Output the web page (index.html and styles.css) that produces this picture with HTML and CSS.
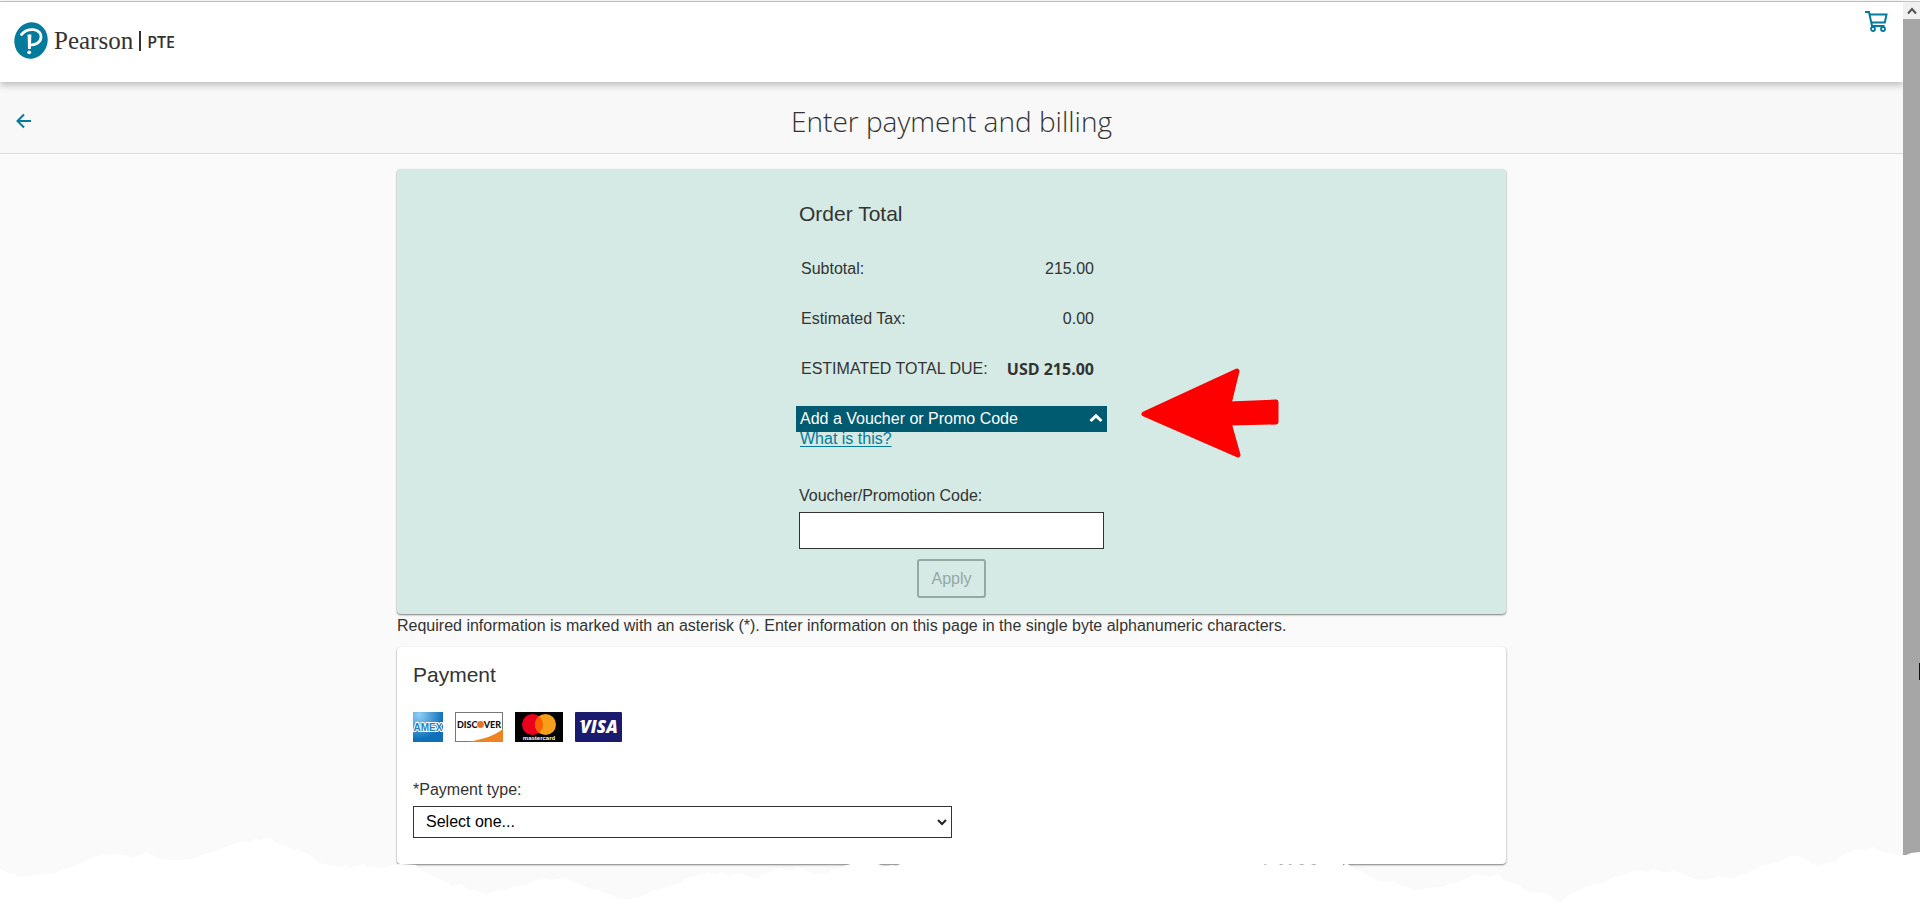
FILE: index.html
```html
<!DOCTYPE html>
<html lang="en">
<head>
  <meta charset="UTF-8">
  <meta name="viewport" content="width=device-width, initial-scale=1.0">
  <title>Enter payment and billing</title>
  <link rel="stylesheet" href="styles.css">
</head>
<body>
  <div class="window">
    <div class="page">
      <!-- Header -->
      <header class="header">
        <a class="logo" href="#">
          <svg class="logo-mark" viewBox="0 0 34 37" aria-hidden="true">
            <ellipse cx="17" cy="18.500" rx="16.600" ry="18.300" transform="rotate(14 17 18.500)" fill="#047a9c"/>
            <path d="M7.500 12.500C10.500 9 15 7.300 19.500 7.700C24.500 8.200 27.500 11.200 27 15.500C26.500 20.500 21.500 23.200 16.800 22.800" fill="none" stroke="#fff" stroke-width="2.800" stroke-linecap="round"/>
            <path d="M13.600 12.500H17.400L16.800 27H14Z" fill="#fff"/>
            <circle cx="15.200" cy="30.300" r="1.900" fill="#fff"/>
          </svg>
          <span class="logo-name">Pearson</span>
          <span class="logo-product">PTE</span>
        </a>
        <a class="cart" href="#" aria-label="Shopping cart">
          <svg viewBox="0 0 24 24" aria-hidden="true">
            <path d="M1 3H5L8 17H20.500M6 5.500H22.500L20.800 13.500H7.500" fill="none" stroke="#047a9c" stroke-width="2"/>
            <circle cx="9" cy="20" r="2" fill="#fff" stroke="#047a9c" stroke-width="1.800"/>
            <circle cx="19" cy="20" r="2" fill="#fff" stroke="#047a9c" stroke-width="1.800"/>
          </svg>
        </a>
      </header>

      <!-- Title bar -->
      <div class="title-bar">
        <a class="back" href="#" aria-label="Back">
          <svg viewBox="0 0 16 16" aria-hidden="true">
            <path d="M15 8H2M8 1.500L1.500 8L8 14.500" fill="none" stroke="#047a9c" stroke-width="2"/>
          </svg>
        </a>
        <h1>Enter payment and billing</h1>
      </div>

      <main class="content">
        <!-- Order total -->
        <section class="order">
          <div class="summary">
            <h2>Order Total</h2>
            <table class="totals">
              <tr><th scope="row">Subtotal:</th><td>215.00</td></tr>
              <tr><th scope="row">Estimated Tax:</th><td>0.00</td></tr>
              <tr><th scope="row">ESTIMATED TOTAL DUE:</th><td class="total-due">USD 215.00</td></tr>
            </table>

            <button class="voucher-toggle" type="button" aria-expanded="true">
              <span>Add a Voucher or Promo Code</span>
              <svg viewBox="0 0 14 10" aria-hidden="true">
                <path d="M1.500 7L7 1.800L12.500 7" fill="none" stroke="#fff" stroke-width="3"/>
              </svg>
            </button>
            <a class="help-link" href="#">What is this?</a>

            <form class="voucher">
              <label for="voucherCode">Voucher/Promotion Code:</label>
              <input type="text" id="voucherCode">
              <button class="apply-button" type="button" disabled>Apply</button>
            </form>

            <!-- Arrow pointing to the voucher button -->
            <svg class="pointer" viewBox="0 0 140 92" aria-hidden="true">
              <path d="M4 47L97 4L89 37L136 35V55L89 56L98 88Z" fill="#f00" stroke="#f00" stroke-width="5" stroke-linejoin="round"/>
            </svg>
          </div>
        </section>

        <p class="required-note">Required information is marked with an asterisk (*). Enter information on this page in the single byte alphanumeric characters.</p>

        <!-- Payment -->
        <section class="payment">
          <h2>Payment</h2>
          <div class="cards">
            <svg class="card-amex" viewBox="0 0 30 30" role="img" aria-label="American Express">
              <defs>
                <radialGradient id="amexBlue" cx="0.2" cy="0.1" r="0.8">
                  <stop offset="0" stop-color="#8fd0f5"/>
                  <stop offset="1" stop-color="#0f70b8"/>
                </radialGradient>
              </defs>
              <rect width="30" height="30" fill="url(#amexBlue)"/>
              <text x="15" y="19" text-anchor="middle" class="amex-text">AMEX</text>
            </svg>
            <svg class="card-wide" viewBox="0 0 48 30" role="img" aria-label="Discover">
              <rect x="0.500" y="0.500" width="47" height="29" fill="#fff" stroke="#777"/>
              <path d="M12 30C26 28 39 24 48 17V30Z" fill="#ee8322"/>
              <text x="2" y="16" class="discover-text">DISC</text>
              <circle cx="25.500" cy="12.500" r="3.400" fill="#e8762a"/>
              <text x="46" y="16" text-anchor="end" class="discover-text">VER</text>
            </svg>
            <svg class="card-wide" viewBox="0 0 48 30" role="img" aria-label="Mastercard">
              <rect width="48" height="30" fill="#000"/>
              <circle cx="17.500" cy="12.500" r="10.500" fill="#eb001b"/>
              <circle cx="30.500" cy="12.500" r="10.500" fill="#f79e1b"/>
              <path d="M24 4.300A10.500 10.500 0 0 1 24 20.700A10.500 10.500 0 0 1 24 4.300Z" fill="#ff5f00"/>
              <text x="24" y="28" text-anchor="middle" class="mastercard-text">mastercard</text>
            </svg>
            <svg class="card-wide" viewBox="0 0 48 30" role="img" aria-label="Visa">
              <rect width="47" height="30" rx="1" fill="#1a1a6e"/>
              <path d="M4 9H9L10 12Z" fill="#fff"/>
              <text x="24" y="21" text-anchor="middle" class="visa-text">VISA</text>
            </svg>
          </div>

          <label for="paymentType">*Payment type:</label>
          <div class="select-box">
            <select id="paymentType">
              <option>Select one...</option>
            </select>
            <svg viewBox="0 0 10 8" aria-hidden="true">
              <path d="M1 2L5 6L9 2" fill="none" stroke="#222" stroke-width="2"/>
            </svg>
          </div>
        </section>
      </main>
    </div>

    <!-- Scroll bar -->
    <div class="scrollbar">
      <div class="scroll-up">
        <svg viewBox="0 0 10 8" aria-hidden="true">
          <path d="M1 6.500L5 2L9 6.500" fill="none" stroke="#505050" stroke-width="2"/>
        </svg>
      </div>
      <div class="scroll-thumb"></div>
      <div class="scroll-mark"></div>
    </div>

    <!-- Torn paper edge -->
    <svg class="torn-edge" viewBox="0 0 1920 88" preserveAspectRatio="none" aria-hidden="true">
      <path fill="#fff" d="M0 48L8 53L14 54L20 57L27 56L32 57L37 55L45 54L53 54L60 50L68 48L76 45L84 42L92 37L98 36L105 35L118 34L126 35L133 38L140 35L147 32L153 35L158 38L167 40L180 40L196 38L203 34L216 31L225 27L241 22L250 21L256 19L262 20L265 17L271 19L278 24L286 26L290 28L297 30L306 33L314 38L320 43L328 45L339 47L346 46L350 48L363 44L372 47L382 48L390 46L400 44L416 45L420 50L428 53L433 56L440 60L445 61L453 66L461 64L468 69L478 71L486 74L494 71L505 70L515 66L525 65L533 61L543 58L552 60L566 58L573 62L580 64L590 69L598 70L610 75L619 79L633 79L644 75L652 71L660 69L670 66L679 63L683 60L693 56L700 55L709 52L715 54L722 52L728 56L740 53L750 57L758 59L762 54L770 52L779 48L785 49L791 51L797 46L804 50L815 54L828 53L832 50L840 48L844 46L854 43H876L885 47L892 45L896 46L902 43H1263L1265 45L1269 43H1276L1281 45L1287 43L1290 45L1295 43L1302 45L1307 43L1314 45L1319 43H1343V46L1346 43L1349 45L1354 49L1363 52L1370 56L1378 61L1394 62L1404 66L1417 71L1425 68L1443 67L1448 64L1458 62L1470 57L1476 54L1490 57L1498 54L1503 60L1519 65L1523 69L1529 72L1547 73L1551 77L1560 82L1568 76L1582 68L1590 66L1595 64L1600 64L1607 61L1611 58L1627 53L1639 50L1646 52L1653 49L1664 53L1672 51L1682 53L1694 59L1704 60L1713 58L1721 56L1733 59L1742 54L1749 52L1756 49L1762 45L1770 44L1780 41L1789 36L1798 36L1805 39L1811 44L1819 45L1827 43L1835 42L1842 35L1850 32L1856 29L1866 31L1873 27L1879 31L1888 33L1902 35L1906 35L1911 33L1920 32V88H0Z"/>
    </svg>
  </div>
</body>
</html>
```
FILE: styles.css
```css
* {
  box-sizing: border-box;
}
body {
  margin: 0;
  font-family: "Liberation Sans", Arial, sans-serif;
  font-size: 16px;
  line-height: 20px;
  color: #333;
  background-color: #fafafa;
}
.window {
  position: relative;
  display: flex;
  min-height: 100vh;
  padding-top: 1px;
  overflow: hidden;
}
.page {
  flex: 1;
  border-top: 1px solid #c4c4c4;
}
svg {
  display: block;
}
h1,
h2,
p {
  margin: 0;
  font-weight: normal;
}
h2 {
  font-size: 21px;
  line-height: 24px;
}
/* Header */
.header {
  position: relative;
  display: flex;
  justify-content: space-between;
  align-items: flex-start;
  height: 80px;
  padding: 7px 15px 0 14px;
  background-color: #fff;
  box-shadow: 0 3px 7px rgba(0, 0, 0, 0.25);
}
.logo {
  display: flex;
  align-items: center;
  padding-top: 13px;
  color: #333;
  text-decoration: none;
}
.logo-mark {
  width: 34px;
  height: 37px;
}
.logo-name {
  margin-left: 6px;
  padding-right: 6px;
  border-right: 2px solid #333;
  font-family: "Liberation Serif", serif;
  font-size: 25px;
}
.logo-product {
  margin-left: 6px;
  padding-top: 3px;
  font-family: "Open Sans", sans-serif;
  font-size: 16px;
  font-weight: 600;
}
.cart svg {
  width: 24px;
  height: 24px;
}
/* Title bar */
.title-bar {
  display: grid;
  grid-template-columns: 32px 1fr 32px;
  align-items: center;
  height: 72px;
  padding: 6px 16px 0;
  border-bottom: 1px solid #ddd;
  background-color: #f8f8f8;
}
.title-bar h1 {
  font-family: "Open Sans", sans-serif;
  font-size: 28px;
  font-weight: 300;
  line-height: 40px;
  text-align: center;
}
.back svg {
  width: 16px;
  height: 16px;
}
/* Content */
.content {
  max-width: 1109px;
  margin: 0 auto;
  padding: 15px 0 43px;
}
.order {
  padding: 33px 0 16px;
  border-radius: 4px;
  background-color: #d5eae4;
  box-shadow: 0 1px 2px rgba(0, 0, 0, 0.5);
}
.summary {
  position: relative;
  display: flex;
  flex-direction: column;
  width: 311px;
  max-width: 100%;
  margin: 0 auto;
}
.summary h2 {
  padding-left: 3px;
}
.totals {
  margin: 18px 8px 12px 0;
  border-collapse: collapse;
}
.totals th,
.totals td {
  height: 50px;
  padding: 0 5px;
  font-weight: normal;
  text-align: left;
}
.totals td {
  text-align: right;
}
.totals .total-due {
  font-family: "Open Sans", sans-serif;
  font-weight: 700;
}
.voucher-toggle {
  position: relative;
  z-index: 1;
  display: flex;
  justify-content: space-between;
  align-items: center;
  height: 26px;
  padding: 0 4px;
  border: none;
  background-color: #005a70;
  color: #fff;
  font: inherit;
  cursor: pointer;
}
.voucher-toggle svg {
  width: 14px;
  height: 10px;
}
.help-link {
  align-self: flex-start;
  margin: -3px 0 0 4px;
  color: #047a9c;
  text-underline-offset: 2px;
}
.voucher {
  display: flex;
  flex-direction: column;
  padding: 37px 3px 0;
}
.voucher input {
  height: 37px;
  margin: 6px 0 10px;
  padding: 0 8px;
  border: 1px solid #333;
  background-color: #fff;
  font: inherit;
}
.apply-button {
  align-self: center;
  height: 39px;
  padding: 0 12px;
  border: 2px solid #94a8a4;
  border-radius: 3px;
  background-color: transparent;
  color: #94a8a4;
  font: inherit;
}
.pointer {
  position: absolute;
  left: 100%;
  top: 165px;
  width: 140px;
  height: 92px;
  margin-left: 33px;
}
.required-note {
  padding: 2px 0 11px;
}
/* Payment */
.payment {
  padding: 16px 16px 26px;
  border-radius: 4px;
  background-color: #fff;
  box-shadow: 0 1px 2px rgba(0, 0, 0, 0.5);
}
.cards {
  display: flex;
  gap: 12px;
  margin: 25px 0 38px;
}
.card-amex {
  width: 30px;
  height: 30px;
}
.card-wide {
  width: 48px;
  height: 30px;
}
.amex-text {
  fill: #2a80c0;
  stroke: #fff;
  stroke-width: 2px;
  paint-order: stroke;
  font-size: 10px;
  font-weight: bold;
}
.discover-text {
  fill: #111;
  font-family: Lato, sans-serif;
  font-size: 9px;
  font-weight: 900;
}
.mastercard-text {
  fill: #fff;
  font-size: 6px;
  font-weight: bold;
}
.visa-text {
  fill: #fff;
  font-family: "Open Sans", sans-serif;
  font-size: 17px;
  font-style: italic;
  font-weight: 800;
}
.select-box {
  position: relative;
  width: 50%;
  min-width: 240px;
  margin-top: 6px;
}
.select-box select {
  display: block;
  width: 100%;
  height: 32px;
  padding: 0 12px;
  border: 1px solid #333;
  border-radius: 0;
  appearance: none;
  background-color: #fff;
  color: #000;
  font: inherit;
}
.select-box svg {
  position: absolute;
  right: 5px;
  top: 12px;
  width: 10px;
  height: 8px;
  pointer-events: none;
}
/* Scroll bar */
.scrollbar {
  position: relative;
  display: flex;
  flex-direction: column;
  width: 17px;
  border-top: 1px solid #c4c4c4;
}
.scroll-up {
  display: flex;
  justify-content: center;
  align-items: center;
  height: 17px;
  background-color: #f0f0f0;
}
.scroll-up svg {
  width: 10px;
  height: 8px;
}
.scroll-thumb {
  flex: 1;
  background-color: #a6a6a6;
}
.scroll-mark {
  position: absolute;
  right: 0;
  top: 73%;
  width: 1px;
  height: 17px;
  background-color: #111;
}
/* Torn paper edge */
.torn-edge {
  position: absolute;
  left: 0;
  bottom: 0;
  z-index: 2;
  width: 100%;
  height: 88px;
}
```
